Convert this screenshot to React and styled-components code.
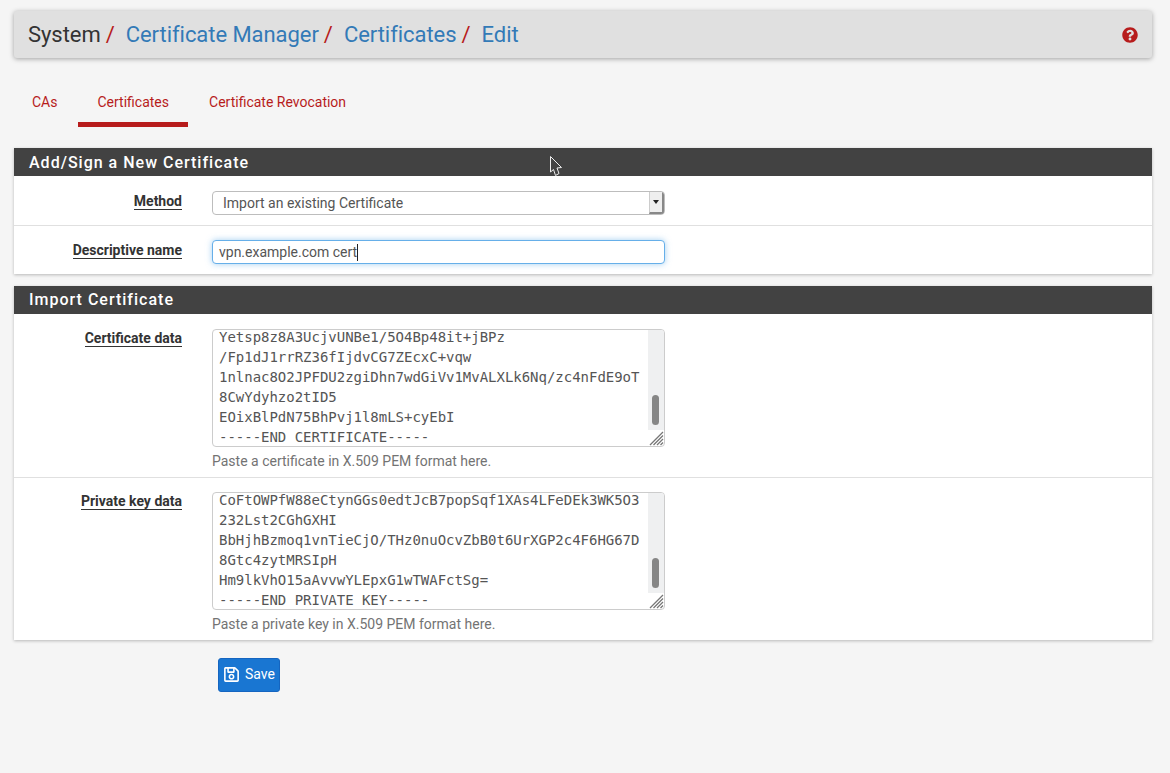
import React from "react";
import styled, { createGlobalStyle } from "styled-components";
import { FaQuestionCircle, FaRegSave } from "react-icons/fa";

const GlobalStyle = createGlobalStyle`
  html, body {
    margin: 0;
    padding: 0;
    background: #f5f5f5;
  }
  body {
    font-family: Roboto, "Liberation Sans", sans-serif;
    font-size: 14px;
    color: #333;
  }
  * {
    box-sizing: border-box;
  }
`;

const Page = styled.div`
  position: relative;
  width: 1170px;
  height: 773px;
  padding: 11px 18px 0 14px;
  overflow: hidden;
`;

const TitleBar = styled.div`
  display: flex;
  align-items: center;
  justify-content: space-between;
  height: 47px;
  padding: 0 14px;
  background: #e0e0e0;
  border-radius: 3px;
  box-shadow: 0 1px 5px rgba(0, 0, 0, 0.35);
`;

const Crumbs = styled.h1`
  margin: 0;
  font-size: 22px;
  font-weight: 400;
  letter-spacing: -0.05px;
  line-height: 47px;
  display: flex;
`;

const Crumb = styled.a`
  color: ${(props) => (props.$link ? "#337ab7" : "#333")};
  text-decoration: none;
`;

const Slash = styled.span`
  color: #b71c1c;
  margin: 0 11px 0 5px;
`;

const HelpLink = styled.a`
  display: flex;
  color: #b71c1c;
  font-size: 16px;
`;

const Tabs = styled.ul`
  display: flex;
  gap: 2px;
  list-style: none;
  margin: 20px 0 21px -1px;
  padding: 0;
`;

const Tab = styled.li`
  height: 49px;
  padding: 16px 19px 0;
  color: #b71c1c;
  font-size: 14px;
  line-height: 17px;
  border-bottom: 5px solid ${(props) => (props.$active ? "#b71c1c" : "transparent")};
`;

const Panel = styled.section`
  background: #fff;
  margin-bottom: 12px;
  box-shadow: 0 1px 3px rgba(0, 0, 0, 0.25);
`;

const PanelHeading = styled.h2`
  margin: 0;
  height: 28px;
  padding: ${(props) => props.$nudge || 0}px 0 0 15px;
  background: #424242;
  color: #fff;
  font-size: 16px;
  font-weight: 500;
  letter-spacing: 1px;
  line-height: 28px;
  overflow: hidden;
`;

const Row = styled.div`
  display: grid;
  grid-template-columns: 168px 453px;
  column-gap: 30px;
  padding: ${(props) => props.$top}px 0 ${(props) => props.$bottom}px;
  & + & {
    border-top: 1px solid #e0e0e0;
  }
`;

const Label = styled.label`
  justify-self: end;
  align-self: start;
  margin-top: ${(props) => props.$drop}px;
  font-weight: 700;
  font-size: 14px;
  line-height: 16px;
  color: #333;
  border-bottom: 1px solid #333;
`;

const SelectBox = styled.div`
  display: flex;
  align-items: center;
  justify-content: space-between;
  height: 24px;
  padding-left: 10px;
  background: #fff;
  border: 1px solid #bdbdbd;
  border-radius: 4px;
  color: #555;
  overflow: hidden;
`;

const SelectArrow = styled.span`
  display: flex;
  align-items: center;
  justify-content: center;
  width: 15px;
  height: 22px;
  background: #eee;
  border-left: 1px solid #ccc;
  border-right: 2px solid #888;
  border-bottom: 2px solid #888;
  &::after {
    content: "";
    border: 3px solid transparent;
    border-top: 4px solid #222;
    border-bottom: 0;
  }
`;

const InputBox = styled.div`
  display: flex;
  align-items: center;
  height: 24px;
  padding-left: 6px;
  background: #fff;
  border: 1px solid #66afe9;
  border-radius: 4px;
  color: #555;
  box-shadow: 0 0 6px rgba(102, 175, 233, 0.6);
`;

const Caret = styled.span`
  width: 1px;
  height: 17px;
  background: #222;
`;

const TextBox = styled.div`
  position: relative;
  display: flex;
  flex-direction: column;
  justify-content: flex-end;
  height: 118px;
  padding-left: 6px;
  background: #fff;
  border: 1px solid #ccc;
  border-radius: 4px;
  overflow: hidden;
`;

const Code = styled.div`
  flex: none;
  margin-bottom: -1px;
  font-family: "DejaVu Sans Mono", "Liberation Mono", monospace;
  font-size: 14px;
  line-height: 20px;
  letter-spacing: -0.02px;
  color: #555;
  white-space: pre;
`;

const ScrollTrack = styled.div`
  position: absolute;
  top: 0;
  right: 0;
  width: 16px;
  height: 100px;
  background: #eff0f1;
`;

const ScrollThumb = styled.div`
  position: absolute;
  top: 65px;
  left: 4px;
  width: 7px;
  height: 30px;
  border-radius: 4px;
  background: #868686;
`;

const Grip = styled.svg`
  position: absolute;
  right: 0;
  bottom: 0;
  width: 16px;
  height: 16px;
`;

const HelpText = styled.div`
  margin-top: 6px;
  color: #737373;
  line-height: 16px;
`;

const SaveButton = styled.button`
  display: flex;
  align-items: center;
  gap: 5px;
  width: 62px;
  height: 34px;
  margin: 18px 0 0 204px;
  padding: 0 0 2px 4px;
  background: #1976d2;
  border: 1px solid #1565c0;
  border-radius: 3px;
  color: #fff;
  font-family: inherit;
  font-size: 14px;
  svg {
    font-size: 17px;
  }
`;

const Pointer = styled.svg`
  position: absolute;
  left: 549px;
  top: 155px;
  width: 14px;
  height: 22px;
`;

const certLines = [
  "Yetsp8z8A3UcjvUNBe1/5O4Bp48it+jBPz",
  "/Fp1dJ1rrRZ36fIjdvCG7ZEcxC+vqw",
  "1nlnac8O2JPFDU2zgiDhn7wdGiVv1MvALXLk6Nq/zc4nFdE9oT",
  "8CwYdyhzo2tID5",
  "EOixBlPdN75BhPvj1l8mLS+cyEbI",
  "-----END CERTIFICATE-----",
];

const keyLines = [
  "CoFtOWPfW88eCtynGGs0edtJcB7popSqf1XAs4LFeDEk3WK5O3",
  "232Lst2CGhGXHI",
  "BbHjhBzmoq1vnTieCjO/THz0nuOcvZbB0t6UrXGP2c4F6HG67D",
  "8Gtc4zytMRSIpH",
  "Hm9lkVhO15aAvvwYLEpxG1wTWAFctSg=",
  "-----END PRIVATE KEY-----",
];

function PemBox({ lines }) {
  return (
    <TextBox>
      <Code>{lines.join("\n")}</Code>
      <ScrollTrack>
        <ScrollThumb />
      </ScrollTrack>
      <Grip viewBox="0 0 16 16">
        <path
          d="M15 2 L2 15 M15 5.5 L5.5 15 M15 9 L9 15 M15 12.5 L12.5 15"
          stroke="#777"
          strokeWidth="1.3"
          fill="none"
        />
      </Grip>
    </TextBox>
  );
}

export default function App() {
  return (
    <Page>
      <GlobalStyle />
      <TitleBar>
        <Crumbs>
          <Crumb>System</Crumb>
          <Slash>/</Slash>
          <Crumb $link>Certificate Manager</Crumb>
          <Slash>/</Slash>
          <Crumb $link>Certificates</Crumb>
          <Slash>/</Slash>
          <Crumb $link>Edit</Crumb>
        </Crumbs>
        <HelpLink>
          <FaQuestionCircle />
        </HelpLink>
      </TitleBar>

      <Tabs>
        <Tab>CAs</Tab>
        <Tab $active>Certificates</Tab>
        <Tab>Certificate Revocation</Tab>
      </Tabs>

      <Panel>
        <PanelHeading $nudge={1}>Add/Sign a New Certificate</PanelHeading>
        <Row $top={15} $bottom={10}>
          <Label $drop={2}>Method</Label>
          <SelectBox>
            Import an existing Certificate
            <SelectArrow />
          </SelectBox>
        </Row>
        <Row $top={14} $bottom={10}>
          <Label $drop={2}>Descriptive name</Label>
          <InputBox>
            vpn.example.com cert
            <Caret />
          </InputBox>
        </Row>
      </Panel>

      <Panel>
        <PanelHeading>Import Certificate</PanelHeading>
        <Row $top={15} $bottom={8}>
          <Label $drop={1}>Certificate data</Label>
          <div>
            <PemBox lines={certLines} />
            <HelpText>Paste a certificate in X.509 PEM format here.</HelpText>
          </div>
        </Row>
        <Row $top={14} $bottom={8}>
          <Label $drop={1}>Private key data</Label>
          <div>
            <PemBox lines={keyLines} />
            <HelpText>Paste a private key in X.509 PEM format here.</HelpText>
          </div>
        </Row>
      </Panel>

      <SaveButton>
        <FaRegSave />
        Save
      </SaveButton>

      <Pointer viewBox="0 0 14 22">
        <path
          d="M1.5 1.5 L12.5 12.5 L8 13 L10 18.5 L6.5 20.5 L4.5 14.5 L1.5 17 Z"
          fill="#424242"
          stroke="#eee"
          strokeWidth="1"
        />
      </Pointer>
    </Page>
  );
}
